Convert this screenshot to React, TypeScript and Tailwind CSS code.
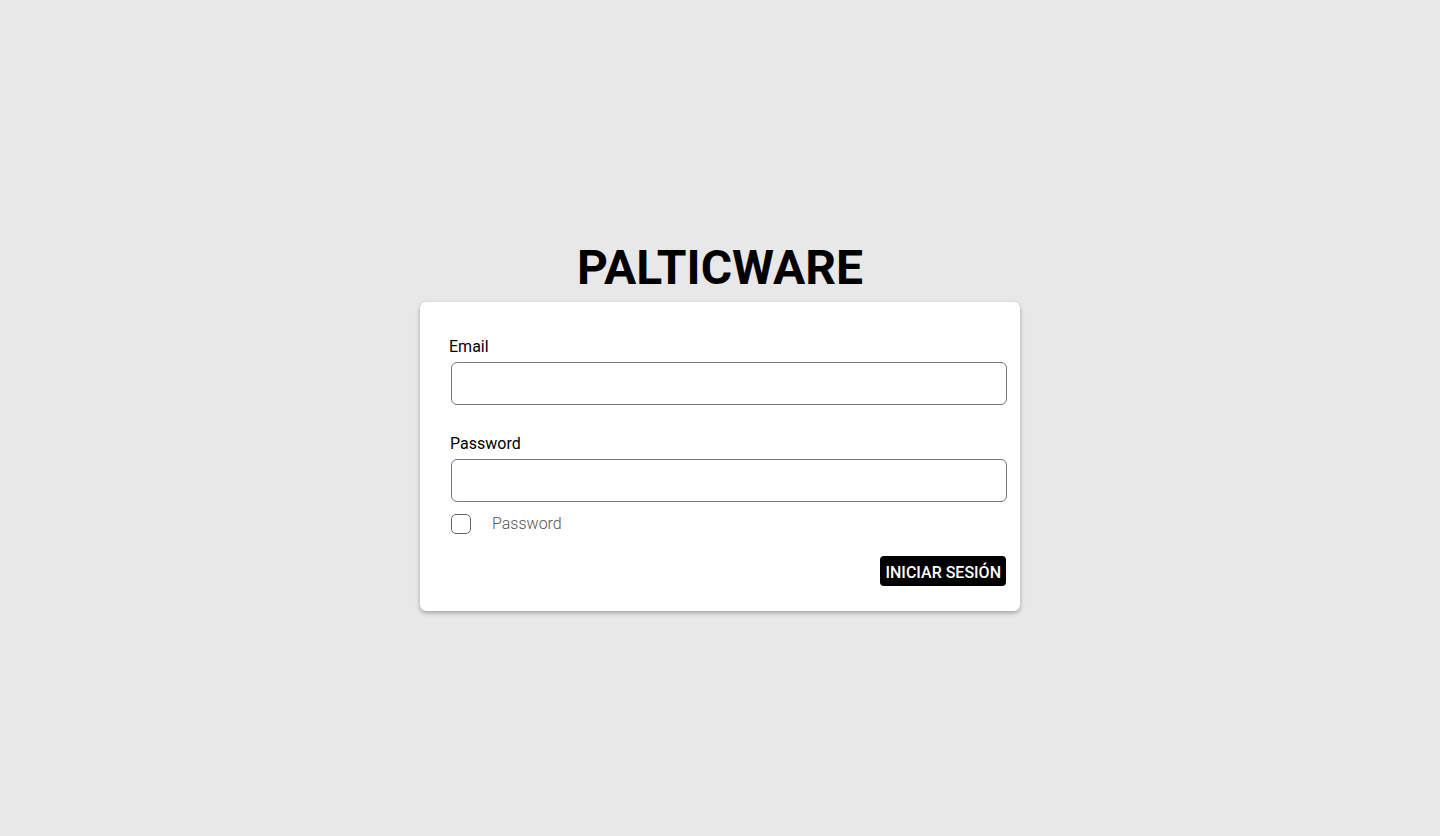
export default function App() {
  return (
    <div className="min-h-screen w-full bg-[#e8e8e8] font-['Roboto',sans-serif] text-black">
      <div className="flex flex-col items-center pt-[238px]">
        {/* Brand */}
        <h1 className="text-[48px] leading-[60px] font-bold tracking-normal">PALTICWARE</h1>

        {/* Login card */}
        <div className="mt-[4px] w-[600px] rounded-[6px] bg-white pl-[28px] pr-[13px] pt-[33px] pb-[25px] shadow-[0_2px_4px_rgba(0,0,0,0.3)]">
          <label className="ml-[1px] block text-[16px] leading-[24px]">Email</label>
          <input
            type="email"
            className="mt-[3px] ml-[3px] block h-[43px] w-[556px] rounded-[6px] border border-[#777] bg-white outline-none"
          />

          <label className="mt-[27px] ml-[2px] block text-[16px] leading-[24px]">Password</label>
          <input
            type="password"
            className="mt-[3px] ml-[3px] block h-[43px] w-[556px] rounded-[6px] border border-[#777] bg-white outline-none"
          />

          <div className="mt-[12px] ml-[3px] flex items-center">
            <span className="h-[20px] w-[20px] rounded-[5px] border border-[#666] bg-white" />
            <span className="ml-[21px] text-[16px] leading-[20px] font-light text-[#555]">Password</span>
          </div>

          <div className="mt-[22px] flex justify-end pr-[1px]">
            <button className="h-[30px] rounded-[4px] bg-black px-[5px] pt-[4px] text-[16px] font-medium leading-[24px] text-white">
              INICIAR SESIÓN
            </button>
          </div>
        </div>
      </div>
    </div>
  );
}
